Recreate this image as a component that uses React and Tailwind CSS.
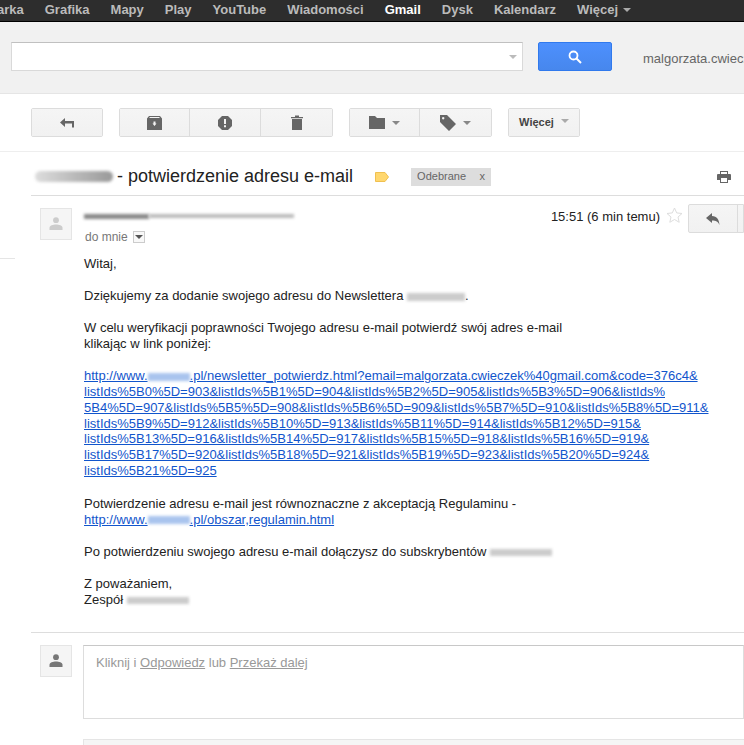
const NAV = ["arka", "Grafika", "Mapy", "Play", "YouTube", "Wiadomości", "Gmail", "Dysk", "Kalendarz", "Więcej"];

const LINK_LINES = [
  "listIds%5B0%5D=903&listIds%5B1%5D=904&listIds%5B2%5D=905&listIds%5B3%5D=906&listIds%",
  "5B4%5D=907&listIds%5B5%5D=908&listIds%5B6%5D=909&listIds%5B7%5D=910&listIds%5B8%5D=911&",
  "listIds%5B9%5D=912&listIds%5B10%5D=913&listIds%5B11%5D=914&listIds%5B12%5D=915&",
  "listIds%5B13%5D=916&listIds%5B14%5D=917&listIds%5B15%5D=918&listIds%5B16%5D=919&",
  "listIds%5B17%5D=920&listIds%5B18%5D=921&listIds%5B19%5D=923&listIds%5B20%5D=924&",
  "listIds%5B21%5D=925",
];

function Caret({ className = "border-t-[#888]" }) {
  return <span className={`inline-block h-0 w-0 border-x-[4px] border-t-[4px] border-x-transparent ${className}`} />;
}

function Person({ fill }) {
  return (
    <svg width="14" height="14" viewBox="0 0 14 14" fill={fill}>
      <circle cx="7" cy="3.2" r="2.9" />
      <path d="M0.5 13v-2.2C0.5 8.8 4 7.6 7 7.6s6.5 1.2 6.5 3.2V13z" />
    </svg>
  );
}

function ToolButton({ className = "", children }) {
  return (
    <div className={`flex h-[27px] items-center justify-center gap-[7px] bg-gradient-to-b from-[#f5f5f5] to-[#f1f1f1] ${className}`}>
      {children}
    </div>
  );
}

function Smudge({ className }) {
  return <span className={`inline-block align-middle blur-[1.5px] ${className}`} />;
}

export default function App() {
  return (
    <div className="h-[745px] w-[744px] overflow-hidden bg-white font-['Liberation_Sans',Arial,sans-serif] text-[13px] text-[#222]">
      <div className="-ml-[3px] flex h-[22px] items-center gap-[21px] overflow-hidden border-b border-black bg-[#2d2d2d] pb-[1px] text-[13px] font-bold text-[#bbb]">
        {NAV.map((item) => (
          <span key={item} className={item === "Gmail" ? "text-white" : ""}>
            {item}
            {item === "Więcej" && <Caret className="ml-[5px] mb-[2px] border-t-[#aaa]" />}
          </span>
        ))}
      </div>

      <div className="flex h-[72px] items-start overflow-hidden border-b border-[#e5e5e5] bg-[#f1f1f1] pl-[11px] pt-[20px]">
        <div className="flex h-[29px] w-[512px] shrink-0 items-center justify-end border border-[#d9d9d9] border-t-[#c0c0c0] bg-white pr-[5px]">
          <Caret className="border-t-[#bbb]" />
        </div>
        <div className="ml-[15px] flex h-[29px] w-[74px] shrink-0 items-center justify-center rounded-[2px] border border-[#3079ed] bg-gradient-to-b from-[#4d90fe] to-[#4787ed]">
          <svg width="14" height="14" viewBox="0 0 14 14" fill="none" stroke="#fff">
            <circle cx="5.500" cy="5.500" r="4" strokeWidth="1.800" />
            <path d="M8.500 8.500L13 13" strokeWidth="2" />
          </svg>
        </div>
        <span className="ml-[31px] mt-[7px] whitespace-nowrap text-[13px] text-[#666]">malgorzata.cwieczek@gmail.com</span>
      </div>

      <div className="flex h-[57px] items-start pl-[31px] pt-[14px]">
        <div className="rounded-[2px] border border-[#dcdcdc]">
          <ToolButton className="w-[70px]">
            <svg width="14" height="10" viewBox="0 0 14 10" fill="#666">
              <path d="M0 4.500L5 0v3h9v6.500h-2V5.500H5V9z" />
            </svg>
          </ToolButton>
        </div>
        <div className="ml-[16px] flex divide-x divide-[#dcdcdc] rounded-[2px] border border-[#dcdcdc]">
          <ToolButton className="w-[70px]">
            <svg width="15" height="14" viewBox="0 0 15 14" fill="#666">
              <path fillRule="evenodd" d="M2 0h11l2 2.500V14H0V2.500zM5.500 7.500L7.500 10l2-2.500H8.500V5.500h-2v2zM2 2h11l-1-1H3z" />
            </svg>
          </ToolButton>
          <ToolButton className="w-[71px]">
            <svg width="14" height="14" viewBox="0 0 14 14">
              <path fill="#666" d="M4 0h6l4 4v6l-4 4H4l-4-4V4z" />
              <path fill="#f3f3f3" d="M6 3h2v5H6zM6 9.200h2v2H6z" />
            </svg>
          </ToolButton>
          <ToolButton className="w-[71px]">
            <svg width="12" height="15" viewBox="0 0 12 15" fill="#666">
              <path d="M0 2h12v1.200H0zM4 0.500h4V2H4zM1 4h10v11H1z" />
            </svg>
          </ToolButton>
        </div>
        <div className="ml-[16px] flex divide-x divide-[#dcdcdc] rounded-[2px] border border-[#dcdcdc]">
          <ToolButton className="w-[70px]">
            <svg width="16" height="13" viewBox="0 0 16 13" fill="#666">
              <path d="M0 0h6l2 2h8v11H0z" />
            </svg>
            <Caret />
          </ToolButton>
          <ToolButton className="w-[71px]">
            <svg width="16" height="16" viewBox="0 0 16 16" fill="#666">
              <path fillRule="evenodd" d="M0 0h7l9 9-7 7-9-9zM3.200 2a1.200 1.200 0 1 0 .01 0z" />
            </svg>
            <Caret />
          </ToolButton>
        </div>
        <div className="ml-[16px] rounded-[2px] border border-[#dcdcdc]">
          <ToolButton className="w-[70px] gap-[3px] text-[11px] font-bold text-[#444]">
            Więcej
            <Caret className="mb-[3px] border-t-[#aaa]" />
          </ToolButton>
        </div>
      </div>

      <div className="border-t border-[#eee] pl-[31px]">
        <div className="flex h-[44px] items-center border-b border-[#ddd] pt-[6px]">
          <Smudge className="ml-[4px] h-[11px] w-[78px] rounded-full bg-gradient-to-r from-[#ddd] to-[#999]" />
          <span className="ml-[4px] text-[18px] text-[#222]">- potwierdzenie adresu e-mail</span>
          <svg className="ml-[22px]" width="14" height="10" viewBox="0 0 14 10">
            <path fill="#ffd76e" stroke="#f0c050" d="M.5.5h9.500l3.500 4.500-3.500 4.500H.5z" />
          </svg>
          <span className="ml-[22px] flex h-[18px] w-[80px] items-center justify-between bg-[#ddd] px-[6px] text-[11px] text-[#666]">
            Odebrane
            <span>x</span>
          </span>
          <svg className="ml-[226px] shrink-0" width="14" height="12" viewBox="0 0 14 12" fill="#666">
            <path fillRule="evenodd" d="M3 0h8v3h2.500l.5 1v5h-3v3H3V9H0V4l.5-1H3zM4 1v2h6V1zM4 7v4h6V7z" />
          </svg>
        </div>
      </div>

      <div className="flex pl-[40px] pt-[12px]">
        <div className="flex h-[32px] w-[32px] shrink-0 items-center justify-center border border-[#e5e5e5] bg-[#f5f5f5]">
          <Person fill="#ccc" />
        </div>
        <div className="ml-[12px] flex-1">
          <div className="flex h-[16px] items-center">
            <Smudge className="h-[5px] w-[65px] bg-[#888]" />
            <Smudge className="h-[4px] w-[145px] bg-[#bbb]" />
          </div>
          <div className="mt-[5px] flex h-[16px] items-center text-[12px] text-[#777]">
            <span className="ml-[1px]">do mnie</span>
            <span className="ml-[5px] flex h-[12px] w-[12px] items-center justify-center border border-[#ccc] bg-[#f8f8f8]">
              <Caret className="border-x-[3px] border-t-[3px] border-t-[#555]" />
            </span>
          </div>
        </div>
        <div className="mt-[-4px] flex h-[29px] shrink-0 items-center">
          <span className="mb-[3px] whitespace-nowrap text-[13px] text-[#222]">15:51 (6 min temu)</span>
          <svg className="mb-[7px] ml-[6px]" width="17" height="16" viewBox="0 0 17 16" fill="none" stroke="#ddd">
            <path d="M8.500 1l2.200 4.900 5.300.6-4 3.500 1.200 5.300-4.700-2.800-4.700 2.800L5 10 1 6.500l5.300-.6z" />
          </svg>
          <div className="ml-[5px] flex h-[29px] w-[56px] rounded-l-[2px] border border-[#dcdcdc] bg-gradient-to-b from-[#f5f5f5] to-[#f1f1f1]">
            <div className="flex w-[49px] items-center justify-center border-r border-[#dcdcdc]">
              <svg width="14" height="12" viewBox="0 0 14 12" fill="#666">
                <path d="M0 5L6 0v3c5 0 7 3.500 7.500 9-1.500-3.500-3.500-4.500-7.500-4.500V10z" />
              </svg>
            </div>
          </div>
        </div>
      </div>

      <div className="relative">
        <div className="absolute left-0 top-[13px] h-px w-[15px] bg-[#e5e5e5]" />
      </div>

      <div className="h-[387px] pl-[84px] pt-[11px] leading-[16px] text-[#222]">
        <p>Witaj,</p>
        <p className="mt-[16px]">
          Dziękujemy za dodanie swojego adresu do Newslettera <Smudge className="h-[8px] w-[58px] bg-[#ccc]" />.
        </p>
        <p className="mt-[16px]">
          W celu weryfikacji poprawności Twojego adresu e-mail potwierdź swój adres e-mail
          <br />
          klikając w link poniżej:
        </p>
        <p className="mt-[16px] whitespace-nowrap leading-[15.85px] text-[#15c] underline">
          http://www.<Smudge className="h-[8px] w-[42px] bg-[#a9c4ee]" />.pl/newsletter_potwierdz.html?email=malgorzata.cwieczek%40gmail.com&amp;code=376c4&amp;
          {LINK_LINES.map((line) => (
            <span key={line} className="block">
              {line}
            </span>
          ))}
        </p>
        <p className="mt-[17px]">
          Potwierdzenie adresu e-mail jest równoznaczne z akceptacją Regulaminu -
          <br />
          <span className="text-[#15c] underline">
            http://www.<Smudge className="h-[8px] w-[42px] bg-[#a9c4ee]" />.pl/obszar,regulamin.html
          </span>
        </p>
        <p className="mt-[16px]">
          Po potwierdzeniu swojego adresu e-mail dołączysz do subskrybentów <Smudge className="h-[7px] w-[62px] bg-[#ccc]" />
        </p>
        <p className="mt-[16px]">
          Z poważaniem,
          <br />
          Zespół <Smudge className="h-[7px] w-[62px] bg-[#ccc]" />
        </p>
      </div>

      <div className="ml-[31px] border-t border-[#ddd] pl-[9px] pt-[12px]">
        <div className="flex">
          <div className="flex h-[32px] w-[32px] shrink-0 items-center justify-center border border-[#e5e5e5] bg-[#f5f5f5]">
            <Person fill="#777" />
          </div>
          <div className="ml-[11px] h-[74px] flex-1 border border-[#ddd] border-t-[#c8c8c8] pl-[12px] pt-[9px] leading-[16px] text-[#999]">
            Kliknij i <span className="underline">Odpowiedz</span> lub <span className="underline">Przekaż dalej</span>
          </div>
        </div>
        <div className="ml-[43px] mt-[20px] h-[20px] border-l border-t border-[#e5e5e5] bg-[#f5f5f5]" />
      </div>
    </div>
  );
}
